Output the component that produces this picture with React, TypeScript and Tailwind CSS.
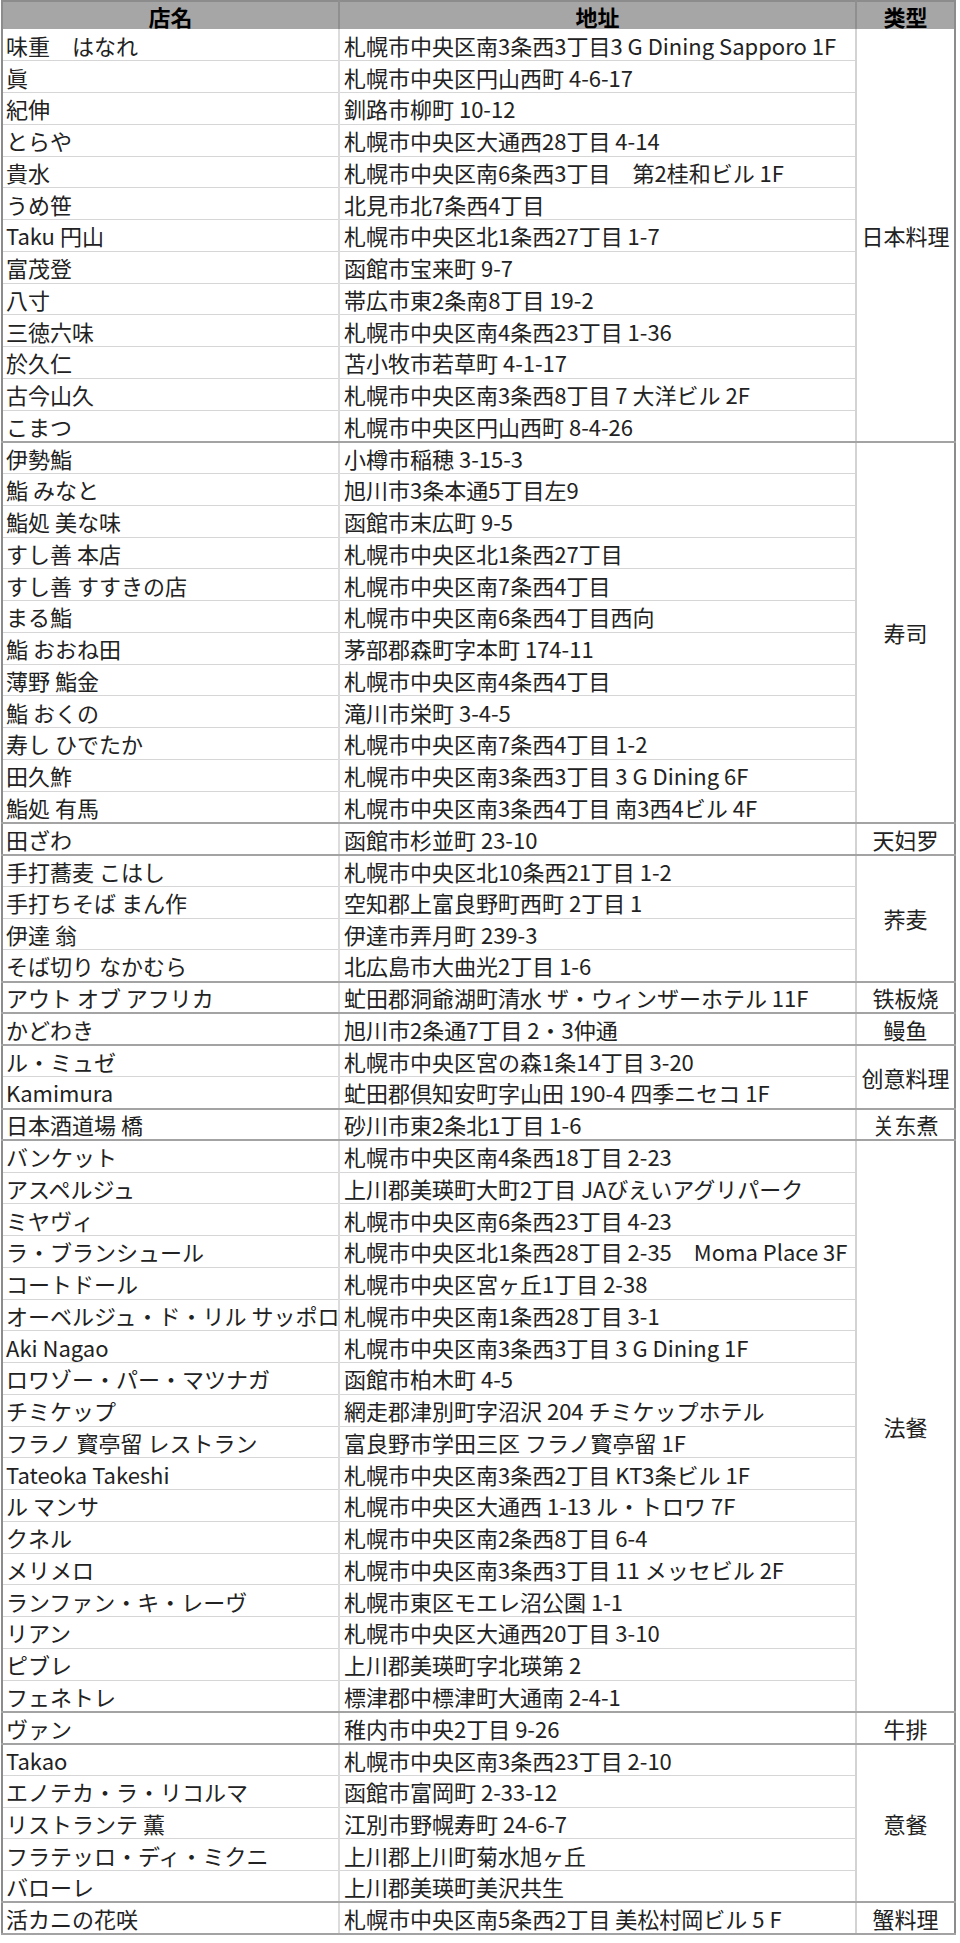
type Row = [string, string];

interface Group {
  type: string;
  rows: Row[];
}

const groups: Group[] = [
  {
    type: "日本料理",
    rows: [
      ["味重　はなれ", "札幌市中央区南3条西3丁目3 G Dining Sapporo 1F"],
      ["眞", "札幌市中央区円山西町 4-6-17"],
      ["紀伸", "釧路市柳町 10-12"],
      ["とらや", "札幌市中央区大通西28丁目 4-14"],
      ["貴水", "札幌市中央区南6条西3丁目　第2桂和ビル 1F"],
      ["うめ笹", "北見市北7条西4丁目"],
      ["Taku 円山", "札幌市中央区北1条西27丁目 1-7"],
      ["富茂登", "函館市宝来町 9-7"],
      ["八寸", "帯広市東2条南8丁目 19-2"],
      ["三徳六味", "札幌市中央区南4条西23丁目 1-36"],
      ["於久仁", "苫小牧市若草町 4-1-17"],
      ["古今山久", "札幌市中央区南3条西8丁目 7 大洋ビル 2F"],
      ["こまつ", "札幌市中央区円山西町 8-4-26"],
    ],
  },
  {
    type: "寿司",
    rows: [
      ["伊勢鮨", "小樽市稲穂 3-15-3"],
      ["鮨 みなと", "旭川市3条本通5丁目左9"],
      ["鮨処 美な味", "函館市末広町 9-5"],
      ["すし善 本店", "札幌市中央区北1条西27丁目"],
      ["すし善 すすきの店", "札幌市中央区南7条西4丁目"],
      ["まる鮨", "札幌市中央区南6条西4丁目西向"],
      ["鮨 おおね田", "茅部郡森町字本町 174-11"],
      ["薄野 鮨金", "札幌市中央区南4条西4丁目"],
      ["鮨 おくの", "滝川市栄町 3-4-5"],
      ["寿し ひでたか", "札幌市中央区南7条西4丁目 1-2"],
      ["田久鮓", "札幌市中央区南3条西3丁目 3 G Dining 6F"],
      ["鮨処 有馬", "札幌市中央区南3条西4丁目 南3西4ビル 4F"],
    ],
  },
  { type: "天妇罗", rows: [["田ざわ", "函館市杉並町 23-10"]] },
  {
    type: "荞麦",
    rows: [
      ["手打蕎麦 こはし", "札幌市中央区北10条西21丁目 1-2"],
      ["手打ちそば まん作", "空知郡上富良野町西町 2丁目 1"],
      ["伊達 翁", "伊達市弄月町 239-3"],
      ["そば切り なかむら", "北広島市大曲光2丁目 1-6"],
    ],
  },
  {
    type: "铁板烧",
    rows: [["アウト オブ アフリカ", "虻田郡洞爺湖町清水 ザ・ウィンザーホテル 11F"]],
  },
  { type: "鳗鱼", rows: [["かどわき", "旭川市2条通7丁目 2・3仲通"]] },
  {
    type: "创意料理",
    rows: [
      ["ル・ミュゼ", "札幌市中央区宮の森1条14丁目 3-20"],
      ["Kamimura", "虻田郡倶知安町字山田 190-4 四季ニセコ 1F"],
    ],
  },
  { type: "关东煮", rows: [["日本酒道場 橋", "砂川市東2条北1丁目 1-6"]] },
  {
    type: "法餐",
    rows: [
      ["バンケット", "札幌市中央区南4条西18丁目 2-23"],
      ["アスペルジュ", "上川郡美瑛町大町2丁目 JAびえいアグリパーク"],
      ["ミヤヴィ", "札幌市中央区南6条西23丁目 4-23"],
      ["ラ・ブランシュール", "札幌市中央区北1条西28丁目 2-35　Moma Place 3F"],
      ["コートドール", "札幌市中央区宮ヶ丘1丁目 2-38"],
      ["オーベルジュ・ド・リル サッポロ", "札幌市中央区南1条西28丁目 3-1"],
      ["Aki Nagao", "札幌市中央区南3条西3丁目 3 G Dining 1F"],
      ["ロワゾー・パー・マツナガ", "函館市柏木町 4-5"],
      ["チミケップ", "網走郡津別町字沼沢 204 チミケップホテル"],
      ["フラノ 寳亭留 レストラン", "富良野市学田三区 フラノ寳亭留 1F"],
      ["Tateoka Takeshi", "札幌市中央区南3条西2丁目 KT3条ビル 1F"],
      ["ル マンサ", "札幌市中央区大通西 1-13 ル・トロワ 7F"],
      ["クネル", "札幌市中央区南2条西8丁目 6-4"],
      ["メリメロ", "札幌市中央区南3条西3丁目 11 メッセビル 2F"],
      ["ランファン・キ・レーヴ", "札幌市東区モエレ沼公園 1-1"],
      ["リアン", "札幌市中央区大通西20丁目 3-10"],
      ["ピブレ", "上川郡美瑛町字北瑛第 2"],
      ["フェネトレ", "標津郡中標津町大通南 2-4-1"],
    ],
  },
  { type: "牛排", rows: [["ヴァン", "稚内市中央2丁目 9-26"]] },
  {
    type: "意餐",
    rows: [
      ["Takao", "札幌市中央区南3条西23丁目 2-10"],
      ["エノテカ・ラ・リコルマ", "函館市富岡町 2-33-12"],
      ["リストランテ 薫", "江別市野幌寿町 24-6-7"],
      ["フラテッロ・ディ・ミクニ", "上川郡上川町菊水旭ヶ丘"],
      ["バローレ", "上川郡美瑛町美沢共生"],
    ],
  },
  { type: "蟹料理", rows: [["活カニの花咲", "札幌市中央区南5条西2丁目 美松村岡ビル 5 F"]] },
];

export default function App() {
  return (
    <div
      className="w-[960px] bg-white pl-px text-[22px] text-[#222]"
      style={{ fontFamily: '"Noto Sans CJK JP", "Noto Sans CJK SC", sans-serif' }}
    >
      <table className="w-[955px] table-fixed border-collapse border-2 border-[#8c8c8c]">
        <colgroup>
          <col className="w-[337px]" />
          <col className="w-[517px]" />
          <col />
        </colgroup>
        <thead>
          <tr className="h-[28px] bg-[#a6a6a6] leading-none text-black">
            <th className="border-r-2 border-[#8f8f8f] font-bold">店名</th>
            <th className="border-r-2 border-[#8f8f8f] font-bold">地址</th>
            <th className="font-bold">类型</th>
          </tr>
        </thead>
        <tbody>
          {groups.map((g) =>
            g.rows.map(([name, addr], i) => {
              const last = i === g.rows.length - 1;
              const line = last ? "border-b-2 border-b-[#a3a3a3]" : "border-b border-b-[#d6d6d6]";
              return (
                <tr key={g.type + i} className="h-[31.75px] leading-none">
                  <td className={`overflow-hidden whitespace-nowrap border-r-2 border-r-[#dcdcdc] pl-[3px] ${line}`}>
                    {name}
                  </td>
                  <td className={`overflow-hidden whitespace-nowrap border-r-2 border-r-[#d3d3d3] pl-[4px] ${line}`}>
                    {addr}
                  </td>
                  {i === 0 && (
                    <td
                      rowSpan={g.rows.length}
                      className="border-b-2 border-b-[#a3a3a3] text-center"
                    >
                      {g.type}
                    </td>
                  )}
                </tr>
              );
            }),
          )}
        </tbody>
      </table>
    </div>
  );
}
